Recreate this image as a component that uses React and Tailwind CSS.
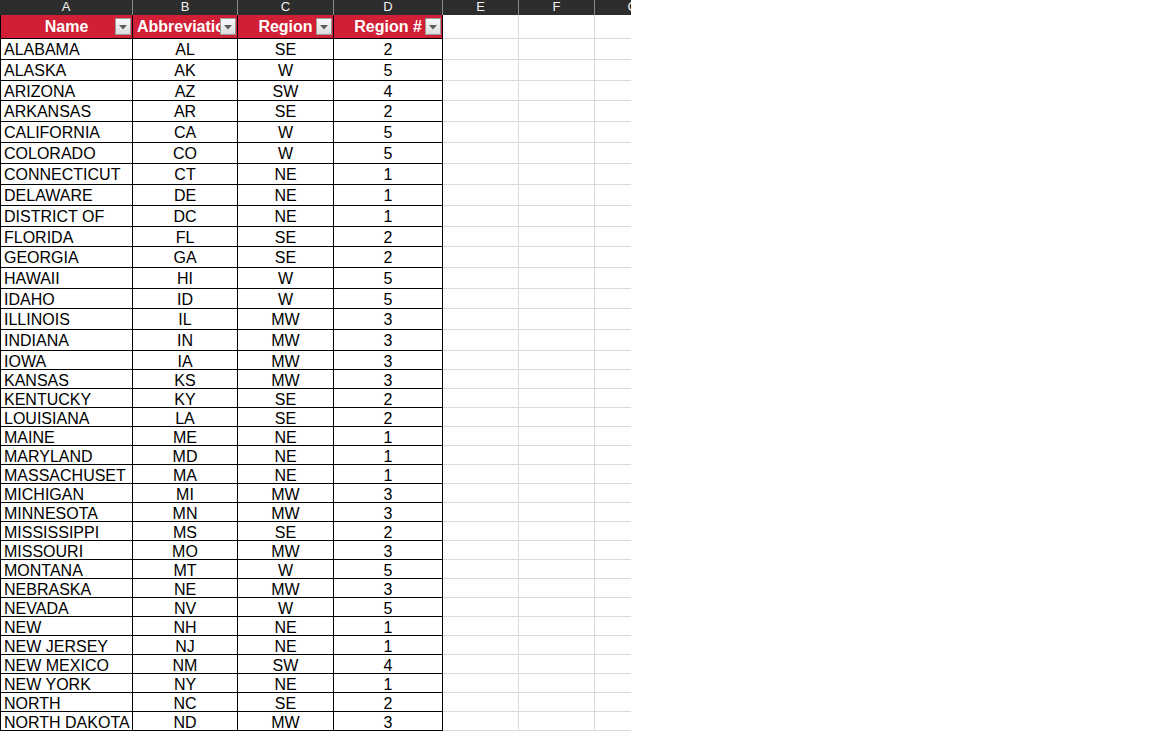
const cols = [
  { letter: 'A', w: 'w-[133px]' },
  { letter: 'B', w: 'w-[105px]' },
  { letter: 'C', w: 'w-[96px]' },
  { letter: 'D', w: 'w-[109px]' },
  { letter: 'E', w: 'w-[76px]' },
  { letter: 'F', w: 'w-[76px]' },
  { letter: 'G', w: 'w-[76px]' },
]

// first block of rows is a touch taller, as in the sheet
const tall = ['h-[21px] pt-[2px]', 'h-[21px] pt-[2px]', 'h-[20px] pt-[2px]', 'h-[21px] pt-[2px]', 'h-[21px] pt-[2px]',
  'h-[21px] pt-[2px]', 'h-[21px] pt-[2px]', 'h-[21px] pt-[2px]', 'h-[21px] pt-[2px]', 'h-[20px] pt-[2px]',
  'h-[21px] pt-[2px]', 'h-[21px] pt-[2px]', 'h-[20px] pt-[2px]', 'h-[21px] pt-[2px]', 'h-[21px] pt-[2px]',
  'h-[19px] pt-[3px]']

const states = [
  ['ALABAMA', 'AL', 'SE', 2],
  ['ALASKA', 'AK', 'W', 5],
  ['ARIZONA', 'AZ', 'SW', 4],
  ['ARKANSAS', 'AR', 'SE', 2],
  ['CALIFORNIA', 'CA', 'W', 5],
  ['COLORADO', 'CO', 'W', 5],
  ['CONNECTICUT', 'CT', 'NE', 1],
  ['DELAWARE', 'DE', 'NE', 1],
  ['DISTRICT OF', 'DC', 'NE', 1],
  ['FLORIDA', 'FL', 'SE', 2],
  ['GEORGIA', 'GA', 'SE', 2],
  ['HAWAII', 'HI', 'W', 5],
  ['IDAHO', 'ID', 'W', 5],
  ['ILLINOIS', 'IL', 'MW', 3],
  ['INDIANA', 'IN', 'MW', 3],
  ['IOWA', 'IA', 'MW', 3],
  ['KANSAS', 'KS', 'MW', 3],
  ['KENTUCKY', 'KY', 'SE', 2],
  ['LOUISIANA', 'LA', 'SE', 2],
  ['MAINE', 'ME', 'NE', 1],
  ['MARYLAND', 'MD', 'NE', 1],
  ['MASSACHUSET', 'MA', 'NE', 1],
  ['MICHIGAN', 'MI', 'MW', 3],
  ['MINNESOTA', 'MN', 'MW', 3],
  ['MISSISSIPPI', 'MS', 'SE', 2],
  ['MISSOURI', 'MO', 'MW', 3],
  ['MONTANA', 'MT', 'W', 5],
  ['NEBRASKA', 'NE', 'MW', 3],
  ['NEVADA', 'NV', 'W', 5],
  ['NEW', 'NH', 'NE', 1],
  ['NEW JERSEY', 'NJ', 'NE', 1],
  ['NEW MEXICO', 'NM', 'SW', 4],
  ['NEW YORK', 'NY', 'NE', 1],
  ['NORTH', 'NC', 'SE', 2],
  ['NORTH DAKOTA', 'ND', 'MW', 3],
]

function FilterButton() {
  return (
    <div className="absolute right-[1px] top-[3px] w-[16px] h-[17px] border border-[#9a9a9a]
                    bg-gradient-to-b from-[#fbfbfb] to-[#dcdcdc] flex items-center justify-center">
      <svg width="8" height="5" viewBox="0 0 8 5" className="mt-[2px]">
        <path d="M0 0 H8 L4 4.5 Z" fill="#5c5c5c" />
      </svg>
    </div>
  )
}

function HeadCell({ w, children, left = false }) {
  return (
    <div className={`${w} relative h-full border-r border-b border-black bg-[#d11f35] overflow-hidden
                     flex items-center ${left ? 'justify-start pl-[4px]' : 'justify-center'}`}>
      <span className="text-white font-bold text-[16px] whitespace-nowrap">{children}</span>
      <FilterButton />
    </div>
  )
}

export default function App() {
  return (
    <div className="w-[1152px] h-[731px] bg-white overflow-hidden font-['Liberation_Sans',Arial,sans-serif]">
      <div className="w-[631px] overflow-hidden">
        <div className="w-[700px]">
          {/* column letters */}
          <div className="flex h-[15px] bg-[#2d2d2d]">
            {cols.map(c => (
              <div key={c.letter}
                   className={`${c.w} h-full border-r border-[#8a8a8a] flex justify-center text-[13px] leading-[14px] text-[#f2f2f2]`}>
                {c.letter}
              </div>
            ))}
          </div>

          {/* table header */}
          <div className="flex h-[24px]">
            <div className="w-[133px] h-full border-l border-black flex">
              <HeadCell w="w-[132px]">Name</HeadCell>
            </div>
            <HeadCell w="w-[105px]" left>Abbreviation</HeadCell>
            <HeadCell w="w-[96px]">Region</HeadCell>
            <HeadCell w="w-[109px]">Region #</HeadCell>
            <div className="w-[76px] h-full border-r border-b border-[#dadada]" />
            <div className="w-[76px] h-full border-r border-b border-[#dadada]" />
            <div className="w-[76px] h-full border-b border-[#dadada]" />
          </div>

          {/* rows */}
          {states.map(([name, abbr, region, num], i) => (
            <div key={name} className={`flex ${tall[i] ? tall[i].split(' ')[0] : 'h-[19px]'} text-[16px] text-black leading-none`}>
              <div className={`w-[133px] h-full border-l border-r border-b border-black pl-[3px] flex items-center overflow-hidden whitespace-nowrap ${tall[i] ? tall[i].split(' ')[1] : 'pt-[3px]'}`}>
                {name}
              </div>
              <div className={`w-[105px] h-full border-r border-b border-black flex items-center justify-center ${tall[i] ? tall[i].split(' ')[1] : 'pt-[3px]'}`}>{abbr}</div>
              <div className={`w-[96px] h-full border-r border-b border-black flex items-center justify-center ${tall[i] ? tall[i].split(' ')[1] : 'pt-[3px]'}`}>{region}</div>
              <div className={`w-[109px] h-full border-r border-b border-black flex items-center justify-center ${tall[i] ? tall[i].split(' ')[1] : 'pt-[3px]'}`}>{num}</div>
              <div className="w-[76px] h-full border-r border-b border-[#dadada]" />
              <div className="w-[76px] h-full border-r border-b border-[#dadada]" />
              <div className="w-[76px] h-full border-b border-[#dadada]" />
            </div>
          ))}
        </div>
      </div>
    </div>
  )
}
